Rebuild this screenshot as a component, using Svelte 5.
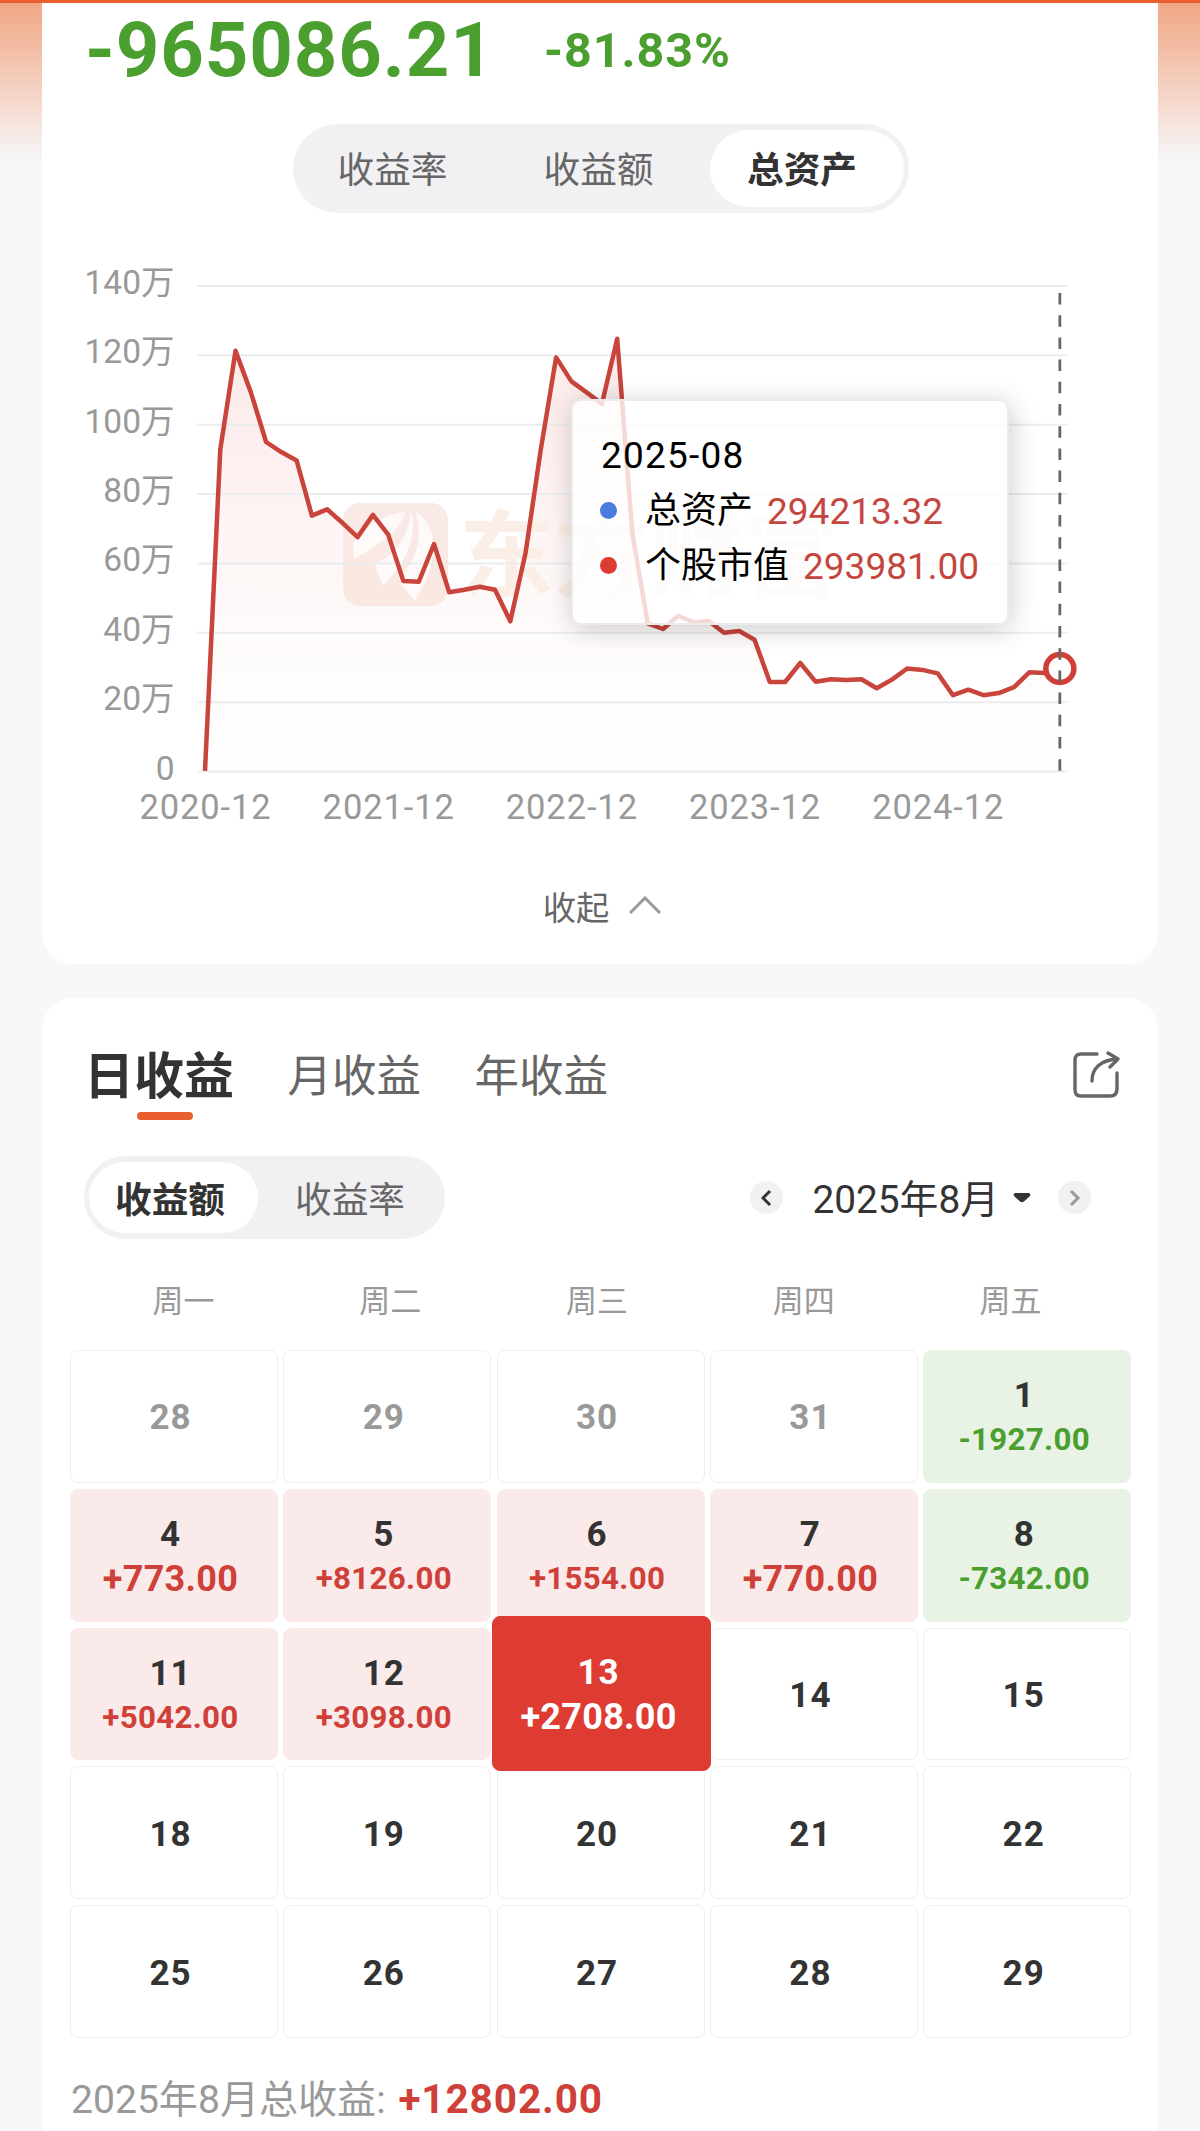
<script>
  // Account overview: asset curve on top, daily profit calendar below.

  const assets = [
    0.2, 92.9, 121.3, 109.4, 95, 92.1, 89.7, 73.8, 75.6, 71.7, 67.6, 74, 68.3, 54.9, 54.7, 65.6, 51.7,
    52.4, 53.3, 52.4, 43.3, 63.1, 92.9, 119.4, 112.5, 109.3, 106, 124.8, 68.6, 42.7, 41.1, 44.9, 43,
    43.4, 40, 40.5, 38, 25.8, 25.8, 31.3, 25.9, 26.6, 26.4, 26.6, 24, 26.5, 29.7, 29.3, 28.3, 22,
    23.6, 22, 22.6, 24.3, 28.6, 28.4, 29.4,
  ];
  const ticks = [140, 120, 100, 80, 60, 40, 20, 0];
  const years = ['2020-12', '2021-12', '2022-12', '2023-12', '2024-12'];

  const step = 15.265;
  const px = (i) => 163 + i * step;
  const py = (v) => 516.5 - v * 3.468;

  const line = assets.map((v, i) => `${px(i).toFixed(1)},${py(v).toFixed(1)}`).join(' ');
  const last = assets.length - 1;
  const area = `${px(0)},${py(0)} ${line} ${px(last)},${py(0)}`;

  const weekdays = ['周一', '周二', '周三', '周四', '周五'];
  const days = [
    { d: 28, out: true }, { d: 29, out: true }, { d: 30, out: true }, { d: 31, out: true }, { d: 1, v: -1927 },
    { d: 4, v: 773 }, { d: 5, v: 8126 }, { d: 6, v: 1554 }, { d: 7, v: 770 }, { d: 8, v: -7342 },
    { d: 11, v: 5042 }, { d: 12, v: 3098 }, { d: 13, v: 2708 }, { d: 14 }, { d: 15 },
    { d: 18 }, { d: 19 }, { d: 20 }, { d: 21 }, { d: 22 },
    { d: 25 }, { d: 26 }, { d: 27 }, { d: 28 }, { d: 29 },
  ];

  let series = $state('总资产');
  let period = $state('日收益');
  let unit = $state('收益额');
  let picked = $state(13);

  const money = (v) => (v > 0 ? '+' : '') + v.toFixed(2);
</script>

<div class="page">
  <section class="card top">
    <div class="sum">
      <span class="total">-965086.21</span>
      <span class="rate">-81.83%</span>
    </div>

    <div class="seg">
      {#each ['收益率', '收益额', '总资产'] as name}
        <button class:active={series === name} onclick={() => (series = name)}>{name}</button>
      {/each}
    </div>

    <div class="chart">
      <svg width="1116" height="580" viewBox="0 0 1116 580">
        <defs>
          <linearGradient id="fill" x1="0" y1="0" x2="0" y2="1">
            <stop offset="0" stop-color="#df3a32" stop-opacity="0.11" />
            <stop offset="0.7" stop-color="#df3a32" stop-opacity="0.02" />
            <stop offset="1" stop-color="#df3a32" stop-opacity="0.005" />
          </linearGradient>
          <linearGradient id="mark" x1="0" y1="0" x2="0" y2="1">
            <stop offset="0" stop-color="#f9eae8" />
            <stop offset="1" stop-color="#fae8e0" />
          </linearGradient>
        </defs>
        <polygon points={area} fill="url(#fill)" />
        <rect x="301" y="248" width="105" height="103" rx="17" fill="url(#mark)" />
        <path class="feather" d="M311 289C322 270 342 260 363 257C360 272 345 285 312 304Z" />
        <path class="feather" d="M369 256C376 276 366 308 341 330C338 322 334 316 333 309C352 300 366 284 369 256Z" />
        <path class="feather" d="M374 257C388 266 393 282 391 298C389 318 380 334 373 346C367 339 360 331 357 323C374 306 382 284 374 257Z" />
        <text class="brand" x="417" y="335">东方财富</text>

        {#each ticks as t}
          <line class="grid" x1="155" x2="1025.5" y1={py(t)} y2={py(t)} />
          <text class="tick" x="132.5" y={py(t) + 8} text-anchor="end">{t ? `${t}万` : '0'}</text>
        {/each}
        {#each years as y, i}
          <text class="tick year" x={px(i * 12) + 0.5} y="564" text-anchor="middle">{y}</text>
        {/each}

        <polyline class="curve" points={line} />
        <circle class="end" cx={px(last)} cy="413.5" r="14" />
        <line class="cursor" x1={px(last)} x2={px(last)} y1="38" y2="516" />
      </svg>

      <div class="tip">
        <div class="date">2025-08</div>
        <div class="row"><i class="dot blue"></i><span>总资产</span><b>294213.32</b></div>
        <div class="row"><i class="dot"></i><span>个股市值</span><b>293981.00</b></div>
      </div>
    </div>

    <button class="fold">
      收起
      <svg width="32" height="18" viewBox="0 0 32 18"><path d="M1 17L16 2L31 17" /></svg>
    </button>
  </section>

  <section class="card cal">
    <header>
      {#each ['日收益', '月收益', '年收益'] as name}
        <button class="tab" class:active={period === name} onclick={() => (period = name)}>{name}</button>
      {/each}
      <svg class="share" width="48" height="48" viewBox="0 0 48 48">
        <path d="M24 3H8Q2 3 2 9V39Q2 45 8 45H37Q44 45 44 38V22" />
        <path d="M19 30C19 17 28 9 44 8" />
        <path d="M35 2L45 8L37 16" />
      </svg>
    </header>

    <div class="bar">
      <div class="seg small">
        {#each ['收益额', '收益率'] as name}
          <button class:active={unit === name} onclick={() => (unit = name)}>{name}</button>
        {/each}
      </div>
      <div class="month">
        <button class="nav" aria-label="上个月">
          <svg width="12" height="18" viewBox="0 0 12 18"><path d="M9 2L2 9L9 16" /></svg>
        </button>
        <span class="name">2025年8月</span>
        <svg class="caret" width="18" height="10" viewBox="0 0 18 10">
          <path d="M2 0H16Q18 1 17 3L11 8.5Q9 10 7 8.5L1 3Q0 1 2 0Z" />
        </svg>
        <button class="nav off" aria-label="下个月">
          <svg width="12" height="18" viewBox="0 0 12 18"><path d="M2 2L9 9L2 16" /></svg>
        </button>
      </div>
    </div>

    <div class="week">
      {#each weekdays as w}<span>{w}</span>{/each}
    </div>

    <div class="days">
      {#each days as day}
        <button
          class="day"
          class:out={day.out}
          class:up={day.v > 0}
          class:down={day.v < 0}
          class:picked={day.v && day.d === picked}
          onclick={() => day.v && (picked = day.d)}
        >
          <span class="num">{day.d}</span>
          {#if day.v}
            <span class="val" class:short={Math.abs(day.v) < 1000}>{money(day.v)}</span>
          {/if}
        </button>
      {/each}
    </div>

    <div class="foot">2025年8月总收益: <b>+12802.00</b></div>
  </section>
</div>

<style>
  :global(body) {
    background: #f7f8fa;
  }
  .page {
    box-sizing: border-box;
    height: 2131px;
    overflow: hidden;
    padding: 0 42px;
    border-top: 3px solid #e95f2e;
    background: linear-gradient(#f1a683, #f7f8fa 160px);
    font-family: Roboto, 'Noto Sans CJK SC', sans-serif;
    color: #333;
  }
  button {
    display: block;
    padding: 0;
    border: none;
    background: none;
    font: inherit;
    color: inherit;
    cursor: pointer;
  }
  svg {
    display: block;
    fill: none;
  }
  .card {
    background: #fff;
    border-radius: 32px;
  }
  .top {
    height: 961px;
    border-radius: 0 0 32px 32px;
  }

  .sum {
    display: flex;
    align-items: center;
    height: 94px;
    padding-left: 43px;
    color: #4a9f2f;
    font-weight: 700;
  }
  .total {
    width: 459px;
    font-size: 76px;
    letter-spacing: 0.9px;
  }
  .rate {
    font-size: 48.5px;
    letter-spacing: 0.9px;
  }

  .seg {
    box-sizing: border-box;
    display: flex;
    width: 616px;
    height: 89px;
    margin: 27px auto 0;
    padding: 6px 5px;
    border-radius: 45px;
    background: #f1f1f4;
    font-size: 36.7px;
    color: #666;
  }
  .top .seg {
    position: relative;
    left: 1px;
  }
  .seg button {
    flex: 1;
    padding: 0 17px 3px 0;
    border-radius: 40px;
  }
  .seg .active {
    box-sizing: border-box;
    flex: 0 0 194px;
    padding-right: 10px;
    background: #fff;
    color: #333;
    font-weight: 700;
  }

  .chart {
    position: relative;
    height: 647px;
    margin-top: 42px;
  }
  .grid {
    stroke: #ebecee;
    stroke-width: 2;
  }
  .tick {
    fill: #999;
    font-size: 33.5px;
  }
  .year {
    font-size: 34.5px;
    letter-spacing: 0.9px;
  }
  .feather {
    fill: #fffafa;
  }
  .brand {
    fill: #fbeee6;
    font-size: 95px;
    font-weight: 700;
  }
  .curve {
    stroke: #c9443b;
    stroke-width: 4.5;
    stroke-linejoin: round;
  }
  .end {
    fill: #fff;
    stroke: #d03e36;
    stroke-width: 5.5;
  }
  .cursor {
    stroke: #666;
    stroke-width: 2.8;
    stroke-dasharray: 11.5 10.7;
  }
  .tip {
    position: absolute;
    box-sizing: border-box;
    left: 529px;
    top: 144px;
    width: 438px;
    height: 226px;
    padding: 27px 28px;
    border: 2px solid #ebebeb;
    border-radius: 10px;
    background: rgba(255, 255, 255, 0.8);
    box-shadow: 2px 4px 28px rgba(0, 0, 0, 0.2);
    font-size: 37px;
    line-height: 55.5px;
    color: #000;
    white-space: nowrap;
  }
  .date {
    letter-spacing: 1.2px;
  }
  .row {
    display: flex;
    align-items: center;
  }
  .row span {
    font-size: 36px;
  }
  .row b {
    margin-left: 14px;
    font-weight: 400;
    color: #c4473f;
  }
  .dot {
    flex: none;
    width: 17px;
    height: 17px;
    margin: 0 28px 2px -1px;
    border-radius: 50%;
    background: #de3b33;
  }
  .blue {
    background: #4c7ce0;
  }
  .fold {
    display: flex;
    align-items: center;
    gap: 20px;
    height: 46px;
    margin: -20px auto 0;
    padding-left: 4px;
    font-size: 33.3px;
    color: #666;
  }
  .fold svg {
    stroke: #999;
    stroke-width: 3;
  }

  .cal {
    height: 1180px;
    margin-top: 34px;
    padding: 1px 27px 0 28px;
  }
  header {
    display: flex;
    align-items: center;
    gap: 53.5px;
    height: 72px;
    margin-top: 41px;
    padding: 0 10px 0 14px;
  }
  .tab {
    padding-top: 1px;
    font-size: 44.5px;
    line-height: 72px;
    color: #666;
  }
  .tab.active {
    position: relative;
    font-size: 50px;
    font-weight: 700;
    color: #333;
  }
  .tab.active::after {
    content: '';
    position: absolute;
    left: 53px;
    bottom: -7px;
    width: 56px;
    height: 8px;
    border-radius: 4px;
    background: #e95f2e;
  }
  .share {
    margin: 0 0 2px auto;
    stroke: #666;
    stroke-width: 3.4;
    stroke-linecap: round;
    stroke-linejoin: round;
  }
  .bar {
    display: flex;
    align-items: center;
    justify-content: space-between;
    margin-top: 44px;
    padding: 0 40px 0 14px;
  }
  .small {
    width: 361px;
    height: 83px;
    margin: 0;
  }
  .small button {
    padding: 0 0 2px 2px;
  }
  .small .active {
    flex-basis: 169px;
    padding-right: 9px;
  }
  .month {
    display: flex;
    align-items: center;
  }
  .nav {
    display: grid;
    place-items: center;
    width: 33px;
    height: 33px;
    border-radius: 50%;
    background: #f1f1f4;
  }
  .nav svg {
    stroke: #333;
    stroke-width: 3;
  }
  .nav.off svg {
    stroke: #999;
  }
  .name {
    margin-left: 29px;
    padding-bottom: 4px;
    font-size: 38.8px;
  }
  .caret {
    margin: 0 27px 0 14px;
    fill: #333;
  }

  .week {
    display: grid;
    grid-template-columns: repeat(5, 206.8px);
    margin: 39px 0 0 10px;
    font-size: 31px;
    line-height: 48px;
    text-align: center;
    color: #999;
  }
  .days {
    display: grid;
    grid-template-columns: repeat(5, 208px);
    grid-auto-rows: 132.8px;
    gap: 6px 5.3px;
    margin-top: 24px;
  }
  .day {
    display: flex;
    flex-direction: column;
    align-items: center;
    justify-content: center;
    padding: 4px 7px 0 0;
    border: 1px solid #eee;
    border-radius: 8px;
    font-weight: 700;
  }
  .num {
    font-size: 35px;
    line-height: 44px;
    letter-spacing: 1px;
  }
  .val {
    font-size: 31.3px;
    line-height: 44px;
    letter-spacing: 0.3px;
  }
  .val.short,
  .picked .val {
    font-size: 36px;
  }
  .out {
    color: #999;
  }
  .up {
    border-color: #faeaea;
    background: #faeaea;
  }
  .up .val {
    color: #cf4039;
  }
  .down {
    padding-right: 6px;
    border-color: #e8f3e6;
    background: #e8f3e6;
  }
  .down .val {
    color: #4a9f2f;
  }
  .picked {
    z-index: 1;
    margin: -12px -6px -11px -5px;
    padding-right: 5px;
    border-color: #de3b33;
    background: #de3b33;
  }
  .picked .num,
  .picked .val {
    color: #fff;
  }
  .foot {
    margin: 31px 0 0 1px;
    font-size: 39.1px;
    line-height: 60px;
    color: #999;
  }
  .foot b {
    margin-left: 3px;
    color: #cf4039;
    font-size: 40.5px;
    letter-spacing: 0.9px;
  }
</style>
